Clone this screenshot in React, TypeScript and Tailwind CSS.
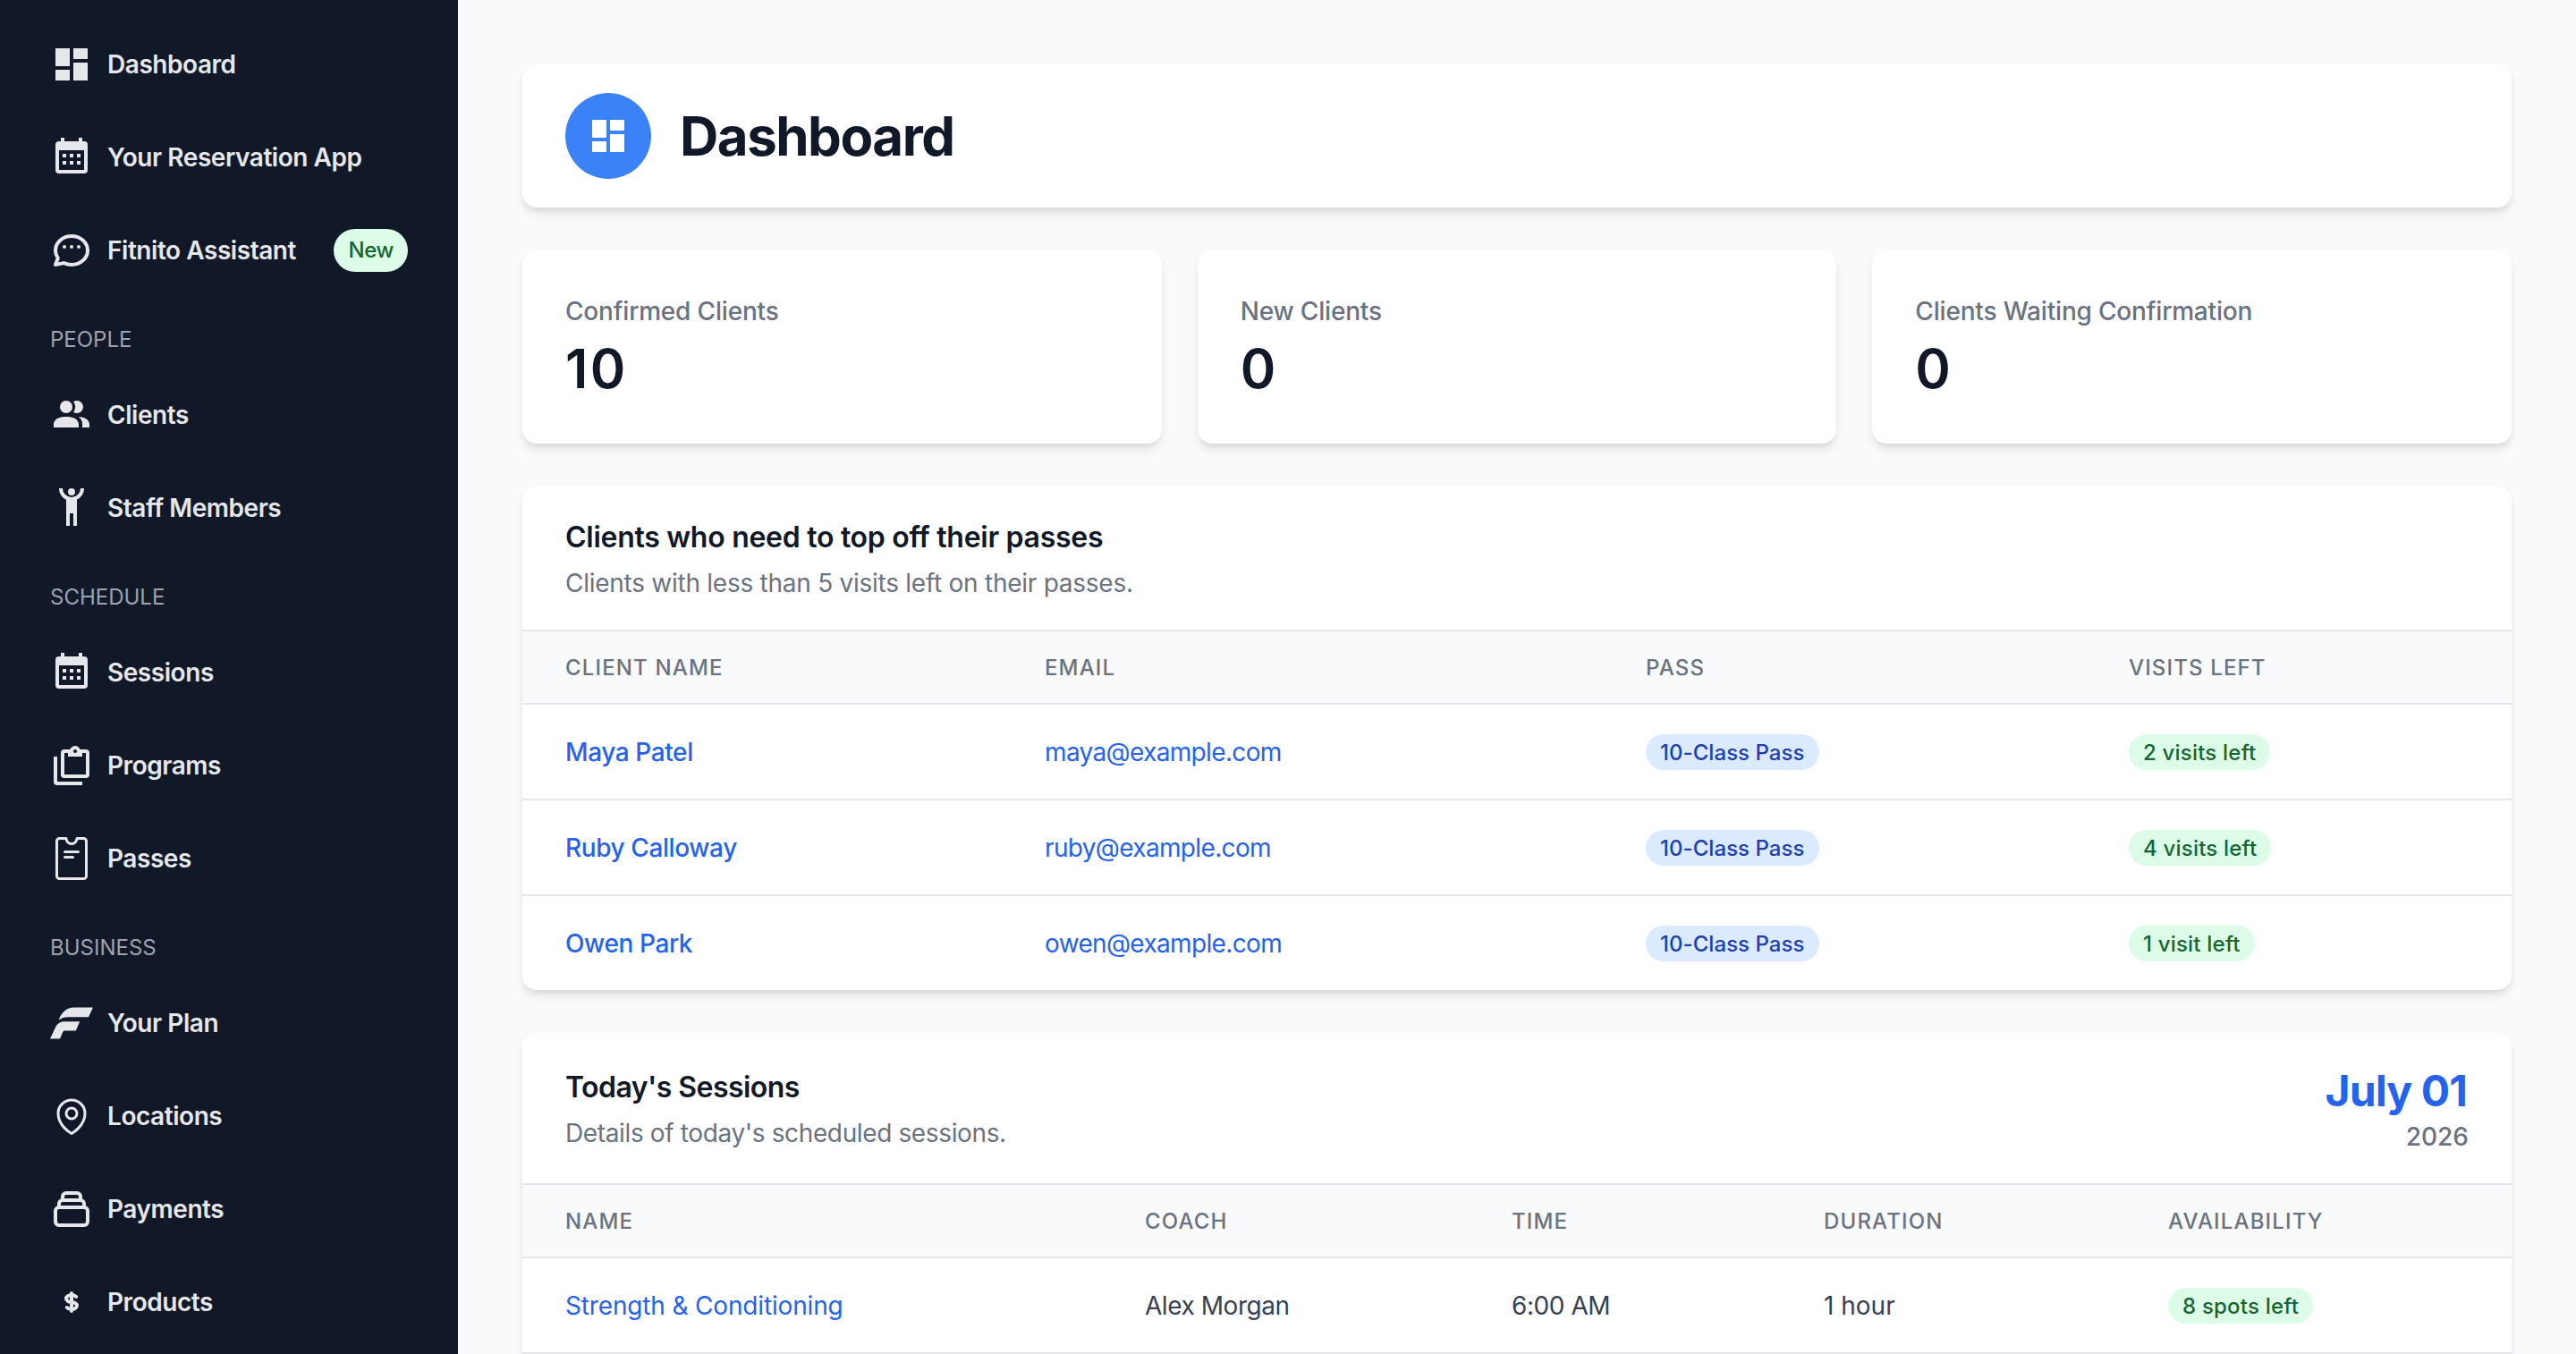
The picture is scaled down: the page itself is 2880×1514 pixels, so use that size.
import { ReactNode } from "react";
import clsx from "clsx";

type IconName = keyof typeof ICONS;

interface NavItem {
  label: string;
  icon: IconName;
  badge?: string;
}

interface NavGroup {
  title?: string;
  items: NavItem[];
}

const ICONS = {
  dashboard: (
    <path
      fill="currentColor"
      d="M3 13h8V3H3v10zm0 8h8v-6H3v6zm10 0h8V11h-8v10zm0-18v6h8V3h-8z"
    />
  ),
  calendar: (
    <path
      fill="currentColor"
      d="M9 10v2H7v-2h2m4 0v2h-2v-2h2m4 0v2h-2v-2h2m2-7a2 2 0 0 1 2 2v14a2 2 0 0 1-2 2H5a2 2 0 0 1-2-2V5a2 2 0 0 1 2-2h1V1h2v2h8V1h2v2h1m0 16V8H5v11h14M9 14v2H7v-2h2m4 0v2h-2v-2h2m4 0v2h-2v-2h2z"
    />
  ),
  chat: (
    <path
      stroke="currentColor"
      strokeWidth={2}
      strokeLinecap="round"
      strokeLinejoin="round"
      d="M8 10h.01M12 10h.01M16 10h.01M21 12c0 4.418-4.03 8-9 8a9.863 9.863 0 01-4.255-.949L3 20l1.395-3.72C3.512 15.042 3 13.574 3 12c0-4.418 4.03-8 9-8s9 3.582 9 8z"
    />
  ),
  clients: (
    <path
      fill="currentColor"
      d="M16 17v2H2v-2s0-4 7-4 7 4 7 4m-3.5-9.5A3.5 3.5 0 1 0 9 11a3.5 3.5 0 0 0 3.5-3.5m3.44 5.5A5.32 5.32 0 0 1 18 17v2h4v-2s0-3.63-6.06-4M15 4a3.39 3.39 0 0 0-1.93.59 5 5 0 0 1 0 5.82A3.39 3.39 0 0 0 15 11a3.5 3.5 0 0 0 0-7z"
    />
  ),
  staff: (
    <path
      fill="currentColor"
      d="M5 1c0 2.7 1.56 5.16 4 6.32V22h2v-7h2v7h2V7.31C17.44 6.16 19 3.7 19 1h-2a5 5 0 0 1-10 0M12 1a2 2 0 0 0-2 2 2 2 0 0 0 2 2 2 2 0 0 0 2-2 2 2 0 0 0-2-2z"
    />
  ),
  clipboard: (
    <path
      fill="currentColor"
      d="M4 7v14h14v2H4a2 2 0 0 1-2-2V7h2m16-4a2 2 0 0 1 2 2v12a2 2 0 0 1-2 2H8a2 2 0 0 1-2-2V5a2 2 0 0 1 2-2h3.18C11.6 1.84 12.7 1 14 1s2.4.84 2.82 2H20m-6 0a1 1 0 0 0-1 1 1 1 0 0 0 1 1 1 1 0 0 0 1-1 1 1 0 0 0-1-1m-4 4V5H8v12h12V5h-2v2"
    />
  ),
  pass: (
    <path
      stroke="currentColor"
      strokeWidth={1.5}
      strokeLinecap="round"
      strokeLinejoin="round"
      d="M9 .75a3 3 0 0 0 6 0h3.75a1.5 1.5 0 0 1 1.5 1.5v19.5a1.5 1.5 0 0 1-1.5 1.5H5.25a1.5 1.5 0 0 1-1.5-1.5V2.25a1.5 1.5 0 0 1 1.5-1.5H9zM8.25 8.25h7.5M8.25 11.25h4.5"
    />
  ),
  plan: (
    <path
      fill="currentColor"
      d="M13.4 3.25H24l-2.5 5.35H10.2c-2.2 0-3.9.6-5.4 1.7C6.3 6.1 9.2 3.25 13.4 3.25zM8.6 11.1h8l-2.2 5.2H8.4c-.8 0-1.1.3-1.4 1L5.5 20.75H0l3.1-6.6c1-2.1 2.9-3.05 5.5-3.05z"
    />
  ),
  pin: (
    <g
      stroke="currentColor"
      strokeWidth={1.5}
      strokeLinecap="round"
      strokeLinejoin="round"
    >
      <path d="M15 10.5a3 3 0 11-6 0 3 3 0 016 0z" />
      <path d="M19.5 10.5c0 7.142-7.5 11.25-7.5 11.25S4.5 17.642 4.5 10.5a7.5 7.5 0 1115 0z" />
    </g>
  ),
  collection: (
    <path
      stroke="currentColor"
      strokeWidth={2}
      strokeLinecap="round"
      strokeLinejoin="round"
      d="M19 11H5m14 0a2 2 0 012 2v6a2 2 0 01-2 2H5a2 2 0 01-2-2v-6a2 2 0 012-2m14 0V9a2 2 0 00-2-2M5 11V9a2 2 0 012-2m0 0V5a2 2 0 012-2h6a2 2 0 012 2v2M7 7h10"
    />
  ),
  dollar: (
    <path
      stroke="currentColor"
      strokeWidth={2}
      strokeLinecap="round"
      strokeLinejoin="round"
      d="M12 8c-1.657 0-3 .895-3 2s1.343 2 3 2 3 .895 3 2-1.343 2-3 2m0-8c1.11 0 2.08.402 2.599 1M12 8V7m0 1v8m0 0v1m0-1c-1.11 0-2.08-.402-2.599-1"
    />
  ),
};

const NAV: NavGroup[] = [
  {
    items: [
      { label: "Dashboard", icon: "dashboard" },
      { label: "Your Reservation App", icon: "calendar" },
      { label: "Fitnito Assistant", icon: "chat", badge: "New" },
    ],
  },
  {
    title: "People",
    items: [
      { label: "Clients", icon: "clients" },
      { label: "Staff Members", icon: "staff" },
    ],
  },
  {
    title: "Schedule",
    items: [
      { label: "Sessions", icon: "calendar" },
      { label: "Programs", icon: "clipboard" },
      { label: "Passes", icon: "pass" },
    ],
  },
  {
    title: "Business",
    items: [
      { label: "Your Plan", icon: "plan" },
      { label: "Locations", icon: "pin" },
      { label: "Payments", icon: "collection" },
      { label: "Products", icon: "dollar" },
    ],
  },
];

const STATS = [
  { label: "Confirmed Clients", value: "10" },
  { label: "New Clients", value: "0" },
  { label: "Clients Waiting Confirmation", value: "0" },
];

const CLIENTS = [
  { name: "Maya Patel", email: "maya@example.com", left: "2 visits left" },
  { name: "Ruby Calloway", email: "ruby@example.com", left: "4 visits left" },
  { name: "Owen Park", email: "owen@example.com", left: "1 visit left" },
];

const SESSIONS = [
  {
    name: "Strength & Conditioning",
    coach: "Alex Morgan",
    time: "6:00 AM",
    duration: "1 hour",
    spots: "8 spots left",
  },
];

const Icon = ({ name }: { name: IconName }) => (
  <svg viewBox="0 0 24 24" fill="none" className="size-12 shrink-0">
    {ICONS[name]}
  </svg>
);

const Card = ({
  children,
  className,
}: {
  children: ReactNode;
  className?: string;
}) => (
  <div
    className={clsx(
      "shrink-0 bg-white rounded-2xl shadow-[0_8px_12px_-2px_rgba(0,0,0,0.1),0_4px_8px_-4px_rgba(0,0,0,0.1)]",
      className,
    )}
  >
    {children}
  </div>
);

const Pill = ({ color, children }: { color: string; children: ReactNode }) => (
  <span
    className={clsx(
      "inline-flex items-center h-10 px-4 pt-0.5 rounded-full text-[24px] font-[550]",
      color,
    )}
  >
    {children}
  </span>
);

const GREEN = "bg-[#dcfce7] text-[#166534] tracking-[0.2px]";
const BLUE = "bg-[#dbeafe] text-[#1e40af] tracking-[0.05px]";

const TableHead = ({ cols, labels }: { cols: string; labels: string[] }) => (
  <div
    className={clsx(
      "grid items-center h-[84px] pt-0.5 border-y-2 border-[#e5e7eb] bg-[#f9fafb] text-[24px] font-medium uppercase tracking-[1.15px] text-[#6b7280]",
      cols,
    )}
  >
    {labels.map((label) => (
      <div key={label} className="pl-12">
        {label}
      </div>
    ))}
  </div>
);

const Sidebar = () => (
  <nav className="w-[512px] shrink-0 bg-[#111827] pt-5 text-[#e5e7eb]">
    {NAV.map(({ title, items }, index) => (
      <div key={index}>
        {title && (
          <p className="px-14 pt-8 pb-4 text-[24px] leading-8 uppercase text-[#9ca3af]">
            {title}
          </p>
        )}
        {items.map(({ label, icon, badge }) => (
          <a key={label} className="flex items-center h-[104px] px-14">
            <Icon name={icon} />
            <span className="ml-4 text-[28px] font-[560] tracking-[-0.45px]">
              {label}
            </span>
            {badge && (
              <span className="ml-auto flex items-center h-12 px-4 rounded-full bg-[#dcfce7] text-[24px] font-[550] tracking-[-0.4px] text-[#166534]">
                {badge}
              </span>
            )}
          </a>
        ))}
      </div>
    ))}
  </nav>
);

const PageHeader = () => (
  <Card className="flex items-center gap-8 h-40 px-12">
    <div className="flex items-center justify-center size-24 rounded-full bg-[#3b82f6] text-white">
      <Icon name="dashboard" />
    </div>
    <h1 className="text-[60px] font-bold tracking-tight text-[#111827]">
      Dashboard
    </h1>
  </Card>
);

const Stats = () => (
  <div className="grid grid-cols-3 gap-10 shrink-0">
    {STATS.map(({ label, value }) => (
      <Card key={label} className="p-12">
        <p className="text-[28px] leading-10 font-[540] tracking-[-0.18px] text-[#6b7280]">
          {label}
        </p>
        <p className="mt-2 text-[60px] leading-[72px] font-[620] tracking-[2.5px] text-[#111827]">
          {value}
        </p>
      </Card>
    ))}
  </div>
);

const CLIENT_COLS = "grid-cols-[536px_672px_540px_1fr]";

const ClientsTable = () => (
  <Card className="overflow-hidden">
    <div className="h-40 px-12 pt-[33px]">
      <h2 className="text-[32px] leading-[48px] font-[640] tracking-[-0.28px] text-[#111827]">
        Clients who need to top off their passes
      </h2>
      <p className="mt-[7px] text-[28px] leading-10 tracking-[-0.26px] text-[#6b7280]">
        Clients with less than 5 visits left on their passes.
      </p>
    </div>
    <TableHead
      cols={CLIENT_COLS}
      labels={["Client name", "Email", "Pass", "Visits left"]}
    />
    <div className="divide-y-2 divide-[#e5e7eb]">
      {CLIENTS.map(({ name, email, left }, index) => (
        <div
          key={name}
          className={clsx(
            "grid items-center text-[28px] text-[#2563eb]",
            index === CLIENTS.length - 1 ? "h-[105px]" : "h-[107px]",
            CLIENT_COLS,
          )}
        >
          <div className="pl-12 font-[550] tracking-[-0.4px]">{name}</div>
          <div className="pl-12 tracking-[-0.65px]">{email}</div>
          <div className="pl-12 flex">
            <Pill color={BLUE}>10-Class Pass</Pill>
          </div>
          <div className="pl-12 flex">
            <Pill color={GREEN}>{left}</Pill>
          </div>
        </div>
      ))}
    </div>
  </Card>
);

const SESSION_COLS = "grid-cols-[648px_410px_349px_385px_1fr]";

const SessionsTable = () => (
  <Card className="overflow-hidden pb-20">
    <div className="flex justify-between h-[168px] px-12">
      <div className="pt-[37px]">
        <h2 className="text-[32px] leading-[48px] font-[640] tracking-[-0.55px] text-[#111827]">
          Today's Sessions
        </h2>
        <p className="mt-[7px] text-[28px] leading-10 tracking-[-0.37px] text-[#6b7280]">
          Details of today's scheduled sessions.
        </p>
      </div>
      <div className="pt-[33px] text-right">
        <p className="mr-0.5 text-[48px] leading-[64px] font-bold tracking-[-0.9px] text-[#2563eb]">
          July 01
        </p>
        <p className="-mt-px text-[28px] leading-10 font-[540] text-[#6b7280]">
          2026
        </p>
      </div>
    </div>
    <TableHead
      cols={SESSION_COLS}
      labels={["Name", "Coach", "Time", "Duration", "Availability"]}
    />
    {SESSIONS.map(({ name, coach, time, duration, spots }) => (
      <div
        key={name}
        className={clsx(
          "grid items-center h-[107px] border-b-2 border-[#e5e7eb] text-[28px] tracking-[-0.45px] text-[#374151]",
          SESSION_COLS,
        )}
      >
        <div className="pl-12 tracking-[-0.16px] text-[#2563eb]">{name}</div>
        <div className="pl-12">{coach}</div>
        <div className="pl-12">{time}</div>
        <div className="pl-12 tracking-normal">{duration}</div>
        <div className="pl-12 flex">
          <Pill color={GREEN}>{spots}</Pill>
        </div>
      </div>
    ))}
  </Card>
);

export default function App() {
  return (
    <div className="flex h-[1514px] overflow-hidden bg-[#f9fafb] font-[Inter,sans-serif] antialiased">
      <Sidebar />
      <main className="flex flex-col flex-1 gap-12 p-[72px]">
        <PageHeader />
        <Stats />
        <ClientsTable />
        <SessionsTable />
      </main>
    </div>
  );
}
